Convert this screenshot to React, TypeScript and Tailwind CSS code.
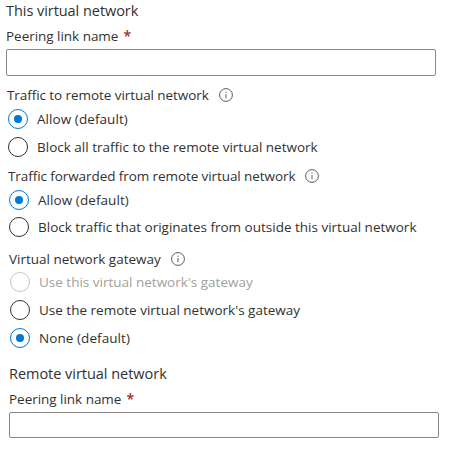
import React from 'react';

function Info() {
  return (
    <svg className="shrink-0" width="14" height="14" viewBox="0 0 14 14" fill="none" stroke="#5c5b5a">
      <circle cx="7" cy="7" r="6.4" strokeWidth="1" />
      <path d="M7 6v4.3M7 3.7v1.2" strokeWidth="1" />
    </svg>
  );
}

function Label({ text, className, info }: { text: string; className: string; info?: boolean }) {
  return (
    <div className={`flex h-5 items-center text-[13.5px] leading-5 ${className}`}>
      <span>{text}</span>
      {info && <Info />}
    </div>
  );
}

function Field({ className, inputClass }: { className: string; inputClass: string }) {
  return (
    <label className={`block ${className}`}>
      <span className="flex h-5 items-center gap-[5px] text-[13.5px] leading-5 tracking-[-0.03px]">
        <span>Peering link name</span>
        <span className="text-[14px] font-semibold text-[#a4262c]">*</span>
      </span>
      <input className={`block w-[430px] rounded-xs border border-[#8a8886] bg-white outline-none ${inputClass}`} />
    </label>
  );
}

function Radio({ text, className, checked, disabled }: { text: string; className: string; checked?: boolean; disabled?: boolean }) {
  const ring = checked ? 'border-[#0078d4]' : disabled ? 'border-[#c8c6c4]' : 'border-[#323130]';
  return (
    <div
      role="radio"
      aria-checked={!!checked}
      className={`flex h-5 items-center gap-[9px] text-[13.5px] leading-5 ${disabled ? 'text-[#a19f9d]' : ''} ${className}`}
    >
      <span className={`flex size-5 shrink-0 items-center justify-center rounded-full border ${ring}`}>
        {checked && <span className="size-[8.5px] rounded-full bg-[#0078d4]" />}
      </span>
      <span>{text}</span>
    </div>
  );
}

export default function App() {
  return (
    <main className="h-[449px] w-[452px] overflow-hidden whitespace-nowrap bg-white font-['Open_Sans','Noto_Sans',sans-serif] text-[#323130]">
      <h2 className="ml-1.5 h-[26px] text-[14.5px] leading-[22px] tracking-[-0.05px]">This virtual network</h2>
      <Field className="ml-1.5" inputClass="mt-[3px] h-[27px]" />
      <Label className="mt-[9px] ml-[7px] gap-2.5 tracking-[-0.07px]" text="Traffic to remote virtual network" info />
      <Radio className="mt-1 ml-2 tracking-[0.07px]" text="Allow (default)" checked />
      <Radio className="mt-2 ml-2" text="Block all traffic to the remote virtual network" />
      <Label className="mt-[9px] ml-2 gap-2.5 tracking-[-0.08px]" text="Traffic forwarded from remote virtual network" info />
      <Radio className="mt-1 ml-[9px] tracking-[0.07px]" text="Allow (default)" checked />
      <Radio className="mt-[7px] ml-[9px]" text="Block traffic that originates from outside this virtual network" />
      <Label className="mt-3 ml-[9px] gap-2.5" text="Virtual network gateway" info />
      <Radio className="mt-[3px] ml-2.5" text="Use this virtual network's gateway" disabled />
      <Radio className="mt-2 ml-2.5" text="Use the remote virtual network's gateway" />
      <Radio className="mt-2 ml-2.5 tracking-[0.07px]" text="None (default)" checked />
      <h2 className="mt-[15px] ml-[9px] h-[26px] text-[14.5px] leading-[22px] tracking-[-0.03px]">Remote virtual network</h2>
      <Field className="ml-[9px]" inputClass="mt-[3px] h-[26px]" />
    </main>
  );
}
